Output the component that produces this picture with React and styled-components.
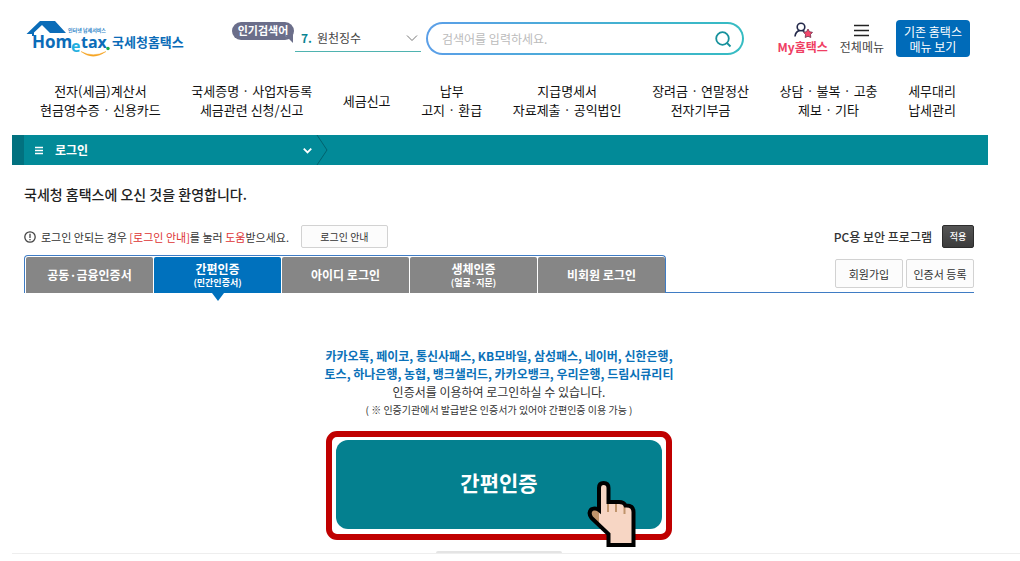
import React, { useState } from 'react'
import styled, { createGlobalStyle } from 'styled-components'

const GlobalStyle = createGlobalStyle`
  *, *::before, *::after {
    box-sizing: border-box;
  }
  body {
    margin: 0;
    background: #fff;
    color: #333;
    font-family: "Noto Sans CJK KR", sans-serif;
    font-size: 12px;
    line-height: 18px;
  }
  button, input, select {
    font: inherit;
    color: inherit;
    margin: 0;
  }
  button {
    cursor: pointer;
  }
  a {
    color: inherit;
    text-decoration: none;
  }
`

const Page = styled.div`
  padding: 0 32px 0 12px;
`

// ----- Header
const Header = styled.header`
  display: flex;
  align-items: flex-start;
  padding: 20px 18px 0 14px;
`

const Logo = styled.a`
  display: flex;
  flex-shrink: 0;
  width: 206px;
`

const LogoText = styled.text`
  font-family: ${props => (props.$latin ? '"Open Sans", sans-serif' : 'inherit')};
  font-weight: 700;
  font-size: ${props => props.$size}px;
  fill: ${props => props.$fill || '#0b6cb8'};
`

const PopularBadge = styled.span`
  position: relative;
  margin-top: 2px;
  width: 62px;
  height: 18px;
  flex-shrink: 0;
  border-radius: 9px;
  background: #6b6e8a;
  color: #fff;
  font-size: 11px;
  font-weight: 700;
  text-align: center;
  line-height: 17px;

  &::after {
    content: '';
    position: absolute;
    right: 1px;
    bottom: -3px;
    border-top: 8px solid #6b6e8a;
    border-left: 8px solid transparent;
  }
`

const Ticker = styled.button`
  display: flex;
  align-items: center;
  width: 126px;
  height: 28px;
  margin: 4px 5px 0 1px;
  padding: 0 3px 0 6px;
  flex-shrink: 0;
  border: 0;
  border-bottom: 1px solid #4fb3b0;
  background: none;
  color: #444;

  b {
    width: 16px;
    text-align: left;
    color: #0a8593;
  }
  svg {
    margin-left: auto;
  }
`

const Search = styled.form`
  display: flex;
  align-items: center;
  flex: 1;
  min-width: 200px;
  height: 33px;
  margin-top: 2px;
  padding: 0 10px 0 14px;
  border: 2px solid transparent;
  border-radius: 17px;
  background:
    linear-gradient(#fff, #fff) padding-box,
    linear-gradient(90deg, #5b9fe8, #35bcc2) border-box;

  input {
    flex: 1;
    min-width: 0;
    padding: 0;
    border: 0;
    outline: 0;
    background: none;
  }
  input::placeholder {
    color: #bbb;
    opacity: 1;
  }
  button {
    display: flex;
    padding: 0;
    border: 0;
    background: none;
  }
`

const QuickMenu = styled.div`
  display: flex;
  align-items: flex-start;
  gap: 12px;
  margin-left: 34px;
`

const QuickLink = styled.a`
  display: flex;
  flex-direction: column;
  align-items: center;
  padding-top: 1px;
  color: ${props => (props.$accent ? '#ef3e63' : '#444')};
  font-weight: ${props => (props.$accent ? 700 : 400)};
`

const OldMenuButton = styled.button`
  width: 74px;
  height: 37px;
  padding: 0;
  border: 0;
  border-radius: 4px;
  background: #006bb9;
  color: #fff;
  line-height: 15px;
`

// ----- Main menu
const MainMenu = styled.nav`
  display: flex;
  align-items: center;
  justify-content: space-between;
  height: 77px;
  padding: 7px 32px 0 28px;

  a {
    text-align: center;
    font-size: 13px;
    line-height: 19px;
    white-space: pre-line;
    color: #111;
  }
`

// ----- Breadcrumb
const Crumbs = styled.div`
  display: flex;
  align-items: center;
  height: 30px;
  border-left: 12px solid #02717f;
  background: #028a98;
`

const Crumb = styled.button`
  display: flex;
  align-items: center;
  gap: 12px;
  width: 288px;
  height: 30px;
  padding: 0 0 0 11px;
  border: 0;
  background: none;
  color: #fff;
  font-weight: 700;

  svg:last-child {
    margin-left: auto;
  }
`

// ----- Content
const Content = styled.main`
  padding: 19px 14px 0 12px;
`

const Title = styled.h1`
  margin: 0 0 21px;
  font-size: 14px;
  font-weight: 500;
  line-height: 20px;
  color: #222;
`

const Row = styled.div`
  display: flex;
  align-items: center;
  justify-content: space-between;
`

const Notice = styled.div`
  display: flex;
  align-items: center;
  gap: 12px;
`

const NoticeText = styled.p`
  display: flex;
  align-items: center;
  gap: 5px;
  margin: 0;
  font-size: 11px;

  em {
    font-style: normal;
    color: #dd3333;
  }
`

const SmallButton = styled.button`
  height: ${props => (props.$tall ? 29 : 23)}px;
  min-width: ${props => props.$width}px;
  padding: 0;
  border: 1px solid #d2d2d2;
  border-radius: 2px;
  background: #fcfcfc;
  font-size: ${props => (props.$tall ? 11 : 10)}px;
  color: #333;
`

const Security = styled.div`
  display: flex;
  align-items: center;
  gap: 10px;
  font-weight: 500;
`

const ApplyButton = styled.button`
  width: 32px;
  height: 23px;
  padding: 0;
  border: 1px solid #2c2c2c;
  border-radius: 2px;
  background: linear-gradient(#555, #3c3c3c);
  color: #fff;
  font-size: 9px;
`

const TabRow = styled.div`
  display: flex;
  align-items: flex-end;
  margin-top: 7px;
`

const TabList = styled.div`
  display: flex;
  gap: 1px;
  padding: 1px 0 0 1px;
  border: 1px solid #3f7cc4;
  border-bottom: 0;
  border-radius: 4px 4px 0 0;
`

const Tab = styled.button`
  position: relative;
  width: 127px;
  height: 36px;
  padding: 0;
  border: 0;
  border-radius: 2px 2px 0 0;
  background: ${props => (props.$active ? '#0071bd' : '#868686')};
  color: #fff;
  font-weight: 700;
  line-height: 16px;

  small {
    display: block;
    font-size: 9px;
    line-height: 12px;
  }

  &::after {
    content: '';
    display: ${props => (props.$active ? 'block' : 'none')};
    position: absolute;
    top: 100%;
    left: calc(50% - 6px);
    border: 6px solid transparent;
    border-top: 8px solid #0071bd;
    border-bottom: 0;
  }
`

const TabActions = styled.div`
  display: flex;
  justify-content: flex-end;
  flex: 1;
  gap: 3px;
  padding-bottom: 4px;
  border-bottom: 1px solid #3f7cc4;
`

const Panel = styled.section`
  display: flex;
  flex-direction: column;
  align-items: center;
  padding-top: 54px;
  text-align: center;
`

const Providers = styled.strong`
  color: #0a71b8;
  white-space: pre-line;
`

const Caption = styled.small`
  font-size: 10px;
`

const Highlight = styled.div`
  position: relative;
  margin-top: 12px;
  padding: 3px 4px 5px;
  border: 6px solid #c00000;
  border-radius: 11px;
`

const AuthButton = styled.button`
  width: 326px;
  height: 89px;
  padding: 0 0 5px;
  border: 0;
  border-radius: 12px;
  background: #04808f;
  color: #fff;
  font-size: 21px;
  font-weight: 700;
`

const Pointer = styled.svg`
  position: absolute;
  right: 29px;
  bottom: -14px;
  pointer-events: none;
`

const Footer = styled.footer`
  display: flex;
  justify-content: center;
  margin-top: 11px;
  margin-right: -32px;
  padding-right: 34px;
  border-bottom: 1px solid #eee;
`

const FooterHandle = styled.span`
  width: 126px;
  height: 2px;
  border-radius: 2px 2px 0 0;
  background: #e4e4e4;
`

const menu = [
  '전자(세금)계산서\n현금영수증 · 신용카드',
  '국세증명 · 사업자등록\n세금관련 신청/신고',
  '세금신고',
  '납부\n고지 · 환급',
  '지급명세서\n자료제출 · 공익법인',
  '장려금 · 연말정산\n전자기부금',
  '상담 · 불복 · 고충\n제보 · 기타',
  '세무대리\n납세관리',
]

const tabs = [
  { label: '공동·금융인증서' },
  { label: '간편인증', note: '(민간인증서)' },
  { label: '아이디 로그인' },
  { label: '생체인증', note: '(얼굴·지문)' },
  { label: '비회원 로그인' },
]

const providers = `카카오톡, 페이코, 통신사패스, KB모바일, 삼성패스, 네이버, 신한은행,
토스, 하나은행, 농협, 뱅크샐러드, 카카오뱅크, 우리은행, 드림시큐리티`

const HometaxLogo = () => (
  <svg width="160" height="38" viewBox="0 0 160 38" role="img" aria-label="국세청홈택스">
    <path d="M0.500 14 L14 1 H29 L40 13 H24 L16 5 L8 12.500 V16 H6 V14 Z" fill="#0b6cb8" />
    <LogoText x="6" y="28" $size={17} $latin>Hom</LogoText>
    <LogoText x="45" y="32" $size={16} $fill="#1fb0e0" $latin>e</LogoText>
    <LogoText x="55" y="28" $size={16} $latin>tax</LogoText>
    <LogoText x="42" y="12" $size={5} $fill="#2f86c8">인터넷 납세서비스</LogoText>
    <circle cx="82" cy="28.500" r="1.700" fill="#18a84a" />
    <path d="M55 31.500 Q67 38 80 31.500 Q67 41 55 31.500 Z" fill="#f6a524" stroke="#f6a524" strokeWidth="0.400" />
    <LogoText x="86" y="27" $size={13}>국세청홈택스</LogoText>
  </svg>
)

const Chevron = ({ size = 12, ...props }) => (
  <svg width={size} height={size} viewBox="0 0 12 12" fill="none" stroke="currentColor" {...props}>
    <path d="M1 3.500 L6 8.500 L11 3.500" />
  </svg>
)

const HandPointer = () => (
  <Pointer width="50" height="68" viewBox="0 0 50 68">
    <path
      d="M21.500 65 V54 L4.500 38 Q0.500 32 5 29 Q9 27.500 12 30 V8 Q12 3 16.500 3 Q21.500 3 21.500 8 V22 H32 Q37 22 38.500 25.500 Q46.500 25 46.500 32 V65 Z"
      fill="#f7d6c4" />
    <path d="M12 31 Q8 28 4.500 31 Q3 34 6 38 L12 44 Z" fill="#c0946c" />
    <path d="M21 24 V32 M29 24 V32 M37.500 26 V34" stroke="#c0946c" strokeWidth="2" />
    <path
      d="M21.500 65 V54 L4.500 38 Q0.500 32 5 29 Q9 27.500 12 30 V8 Q12 3 16.500 3 Q21.500 3 21.500 8 V22 H32 Q37 22 38.500 25.500 Q46.500 25 46.500 32 V65 Z"
      fill="none" stroke="#000" strokeWidth="4" />
  </Pointer>
)

const App = () => {
  const [active, setActive] = useState(1)

  return (
    <Page>
      <GlobalStyle />
      <Header>
        <Logo href="#"><HometaxLogo /></Logo>
        <PopularBadge>인기검색어</PopularBadge>
        <Ticker type="button">
          <b>7.</b> 원천징수
          <Chevron stroke="#777" />
        </Ticker>
        <Search onSubmit={e => e.preventDefault()}>
          <input type="text" aria-label="검색어" placeholder="검색어를 입력하세요." />
          <button type="submit" aria-label="검색">
            <svg width="18" height="18" viewBox="0 0 18 18" fill="none" stroke="#16919c" strokeWidth="1.800">
              <circle cx="8.500" cy="8.500" r="6.300" />
              <path d="M13 13 L16.500 16.500" />
            </svg>
          </button>
        </Search>
        <QuickMenu>
          <QuickLink href="#" $accent>
            <svg width="22" height="17" viewBox="0 0 22 17" fill="none">
              <circle cx="9" cy="6" r="3.800" stroke="#23284a" strokeWidth="1.600" />
              <path d="M3 15.500 Q3.500 10.500 7.500 9.600 M10.500 9.600 L12.500 10.500" stroke="#23284a" strokeWidth="1.600" />
              <path d="M16 8 L17.500 10.700 L20.500 11.300 L18.500 13.500 L18.800 16.500 L16 15.300 L13.200 16.500 L13.500 13.500 L11.500 11.300 L14.500 10.700 Z" fill="#f4476b" stroke="#5a2440" strokeWidth="0.700" />
            </svg>
            My홈택스
          </QuickLink>
          <QuickLink href="#">
            <svg width="15" height="17" viewBox="0 0 15 17" stroke="#222" strokeWidth="1.600">
              <path d="M0 4.500 H15 M0 9.500 H15 M0 14.500 H15" />
            </svg>
            전체메뉴
          </QuickLink>
          <OldMenuButton type="button">기존 홈택스<br />메뉴 보기</OldMenuButton>
        </QuickMenu>
      </Header>

      <MainMenu>
        {menu.map(item => <a href="#" key={item}>{item}</a>)}
      </MainMenu>

      <Crumbs>
        <Crumb type="button">
          <svg width="8" height="9" viewBox="0 0 8 9" stroke="#fff" strokeWidth="1.600">
            <path d="M0 1.500 H8 M0 4.500 H8 M0 7.500 H8" />
          </svg>
          로그인
          <Chevron size={9} strokeWidth="2.400" />
        </Crumb>
        <svg width="17" height="30" viewBox="0 0 17 30" fill="none" stroke="#02626e">
          <path d="M5 0 L15 15 L5 30" />
        </svg>
      </Crumbs>

      <Content>
        <Title>국세청 홈택스에 오신 것을 환영합니다.</Title>
        <Row>
          <Notice>
            <NoticeText>
              <svg width="12" height="12" viewBox="0 0 12 12" fill="none" stroke="#444" strokeWidth="1.300">
                <circle cx="6" cy="6" r="5.200" />
                <path d="M6 2.800 V7 M6 8 V9.300" />
              </svg>
              <span>로그인 안되는 경우 <em>[로그인 안내]</em>를 눌러 <em>도움</em>받으세요.</span>
            </NoticeText>
            <SmallButton type="button" $width={87}>로그인 안내</SmallButton>
          </Notice>
          <Security>
            PC용 보안 프로그램
            <ApplyButton type="button">적용</ApplyButton>
          </Security>
        </Row>

        <TabRow>
          <TabList role="tablist">
            {tabs.map((tab, i) => (
              <Tab
                key={tab.label}
                type="button"
                role="tab"
                aria-selected={i === active}
                $active={i === active}
                onClick={() => setActive(i)}>
                {tab.label}
                {tab.note && <small>{tab.note}</small>}
              </Tab>
            ))}
          </TabList>
          <TabActions>
            <SmallButton type="button" $tall $width={68}>회원가입</SmallButton>
            <SmallButton type="button" $tall $width={68}>인증서 등록</SmallButton>
          </TabActions>
        </TabRow>

        <Panel>
          <Providers>{providers}</Providers>
          <span>인증서를 이용하여 로그인하실 수 있습니다.</span>
          <Caption>( ※ 인증기관에서 발급받은 인증서가 있어야 간편인증 이용 가능 )</Caption>
          <Highlight>
            <AuthButton type="button">간편인증</AuthButton>
            <HandPointer />
          </Highlight>
        </Panel>
      </Content>
      <Footer><FooterHandle /></Footer>
    </Page>
  )
}

export default App
